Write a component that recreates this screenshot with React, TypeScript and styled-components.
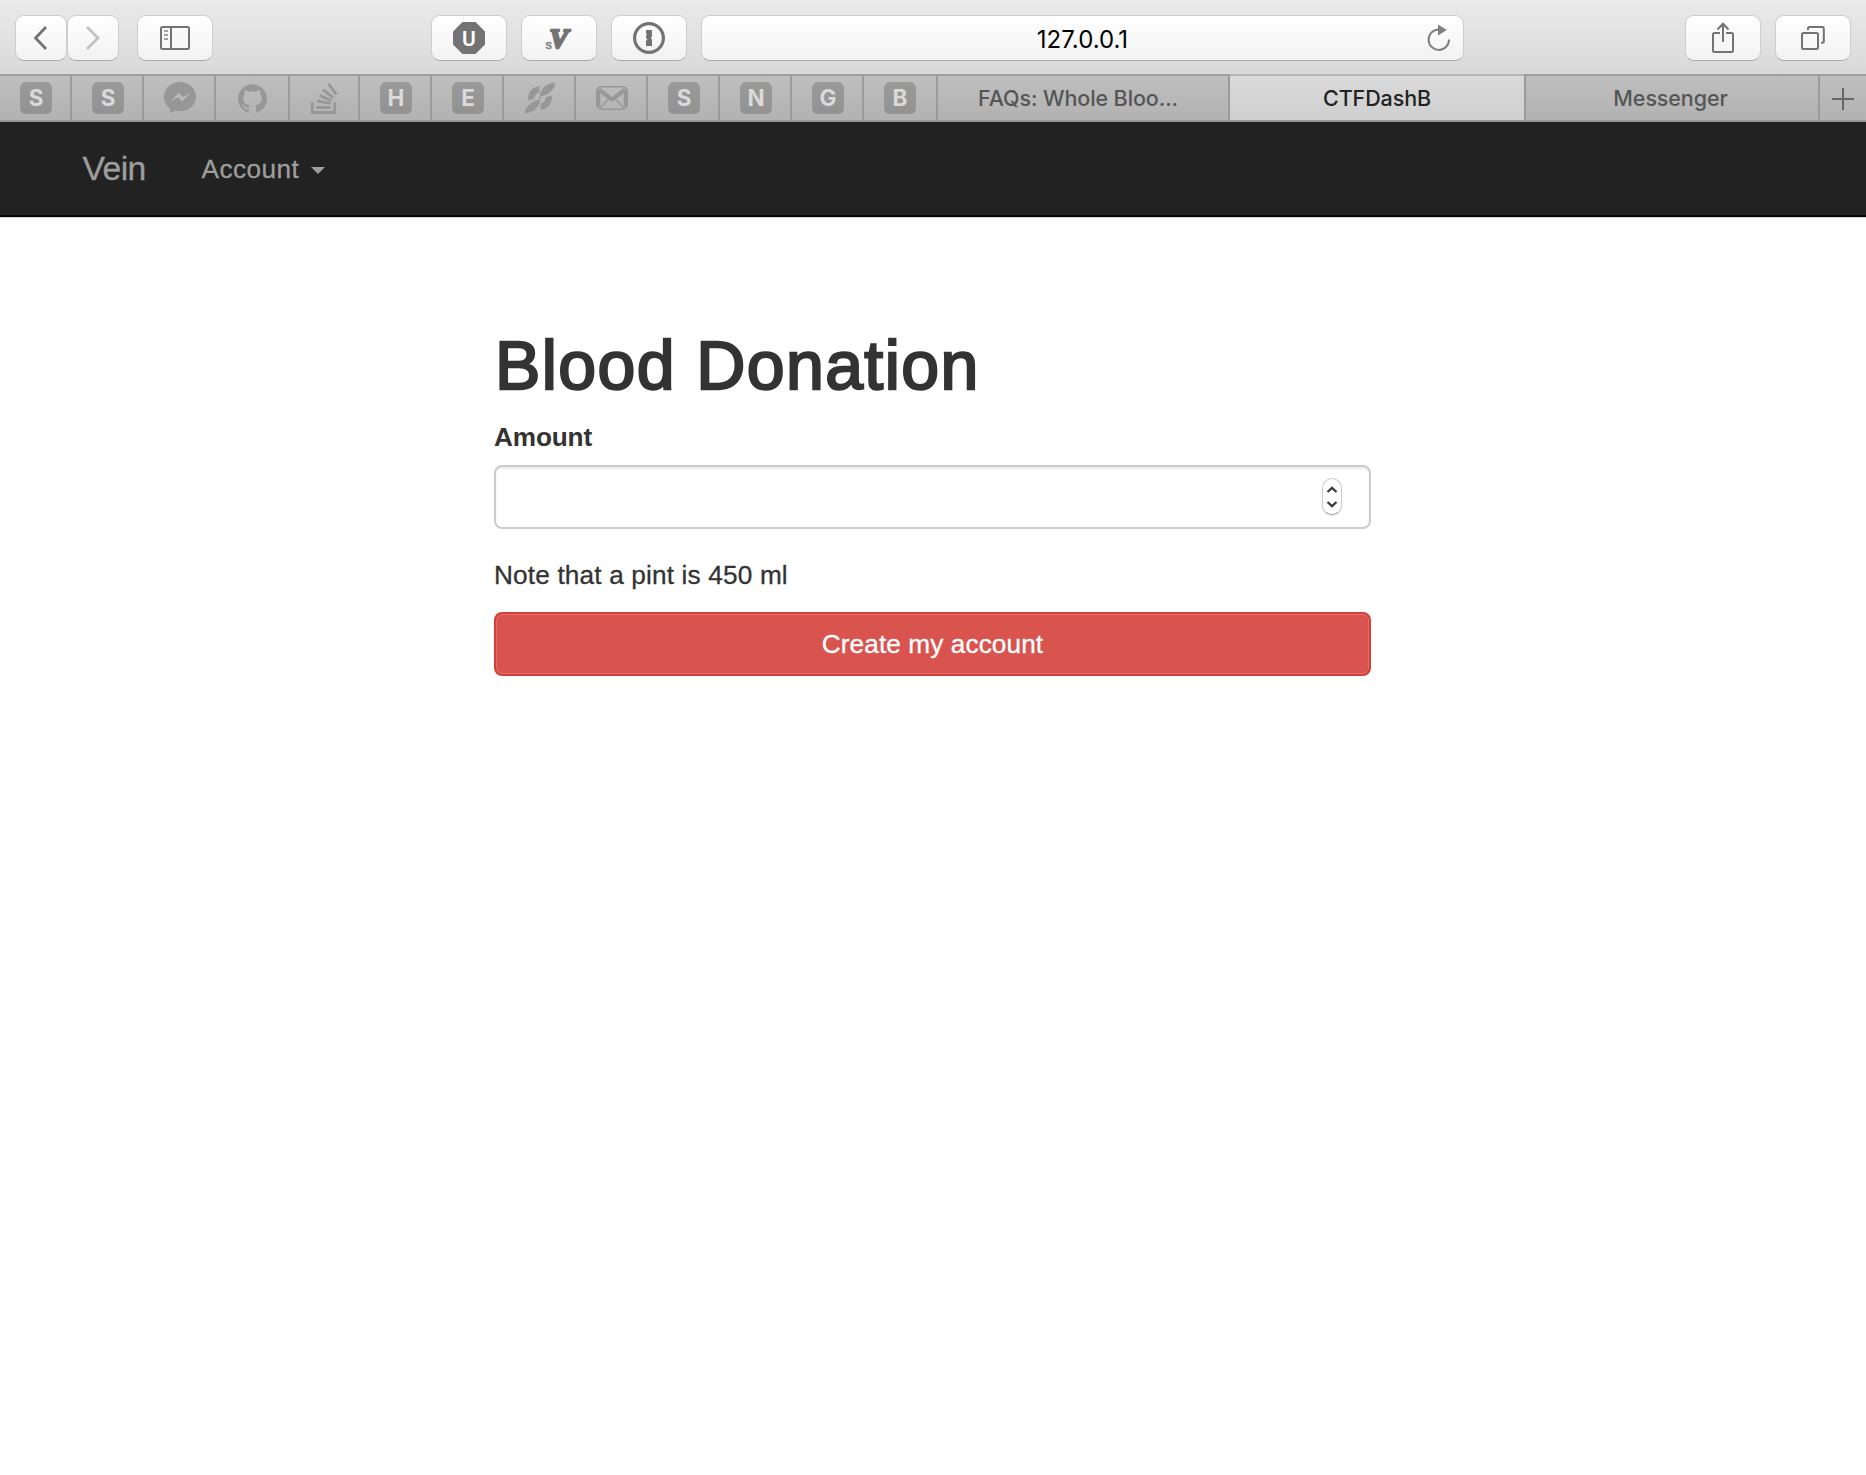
import { useState } from "react";
import styled, { createGlobalStyle } from "styled-components";
import { SiGithub } from "react-icons/si";

type Pin = { id: number; letter?: string; icon?: React.ReactNode; width?: number };

const pins: Pin[] = [
  { id: 1, letter: "S" },
  { id: 2, letter: "S" },
  { id: 3, icon: <MessengerIcon /> },
  { id: 4, icon: <GithubMark />, width: 74 },
  { id: 5, icon: <StackIcon />, width: 70 },
  { id: 6, letter: "H" },
  { id: 7, letter: "E" },
  { id: 8, icon: <PropellerIcon /> },
  { id: 9, icon: <MailIcon /> },
  { id: 10, letter: "S" },
  { id: 11, letter: "N" },
  { id: 12, letter: "G" },
  { id: 13, letter: "B", width: 74 },
];

export default function App() {
  return (
    <>
      <GlobalStyle />
      <Toolbar>
        <ToolButton $width={52}>
          <Icon>
            <path d="M21 5 10.5 16 21 27" strokeWidth="2.8" />
          </Icon>
        </ToolButton>
        <ToolButton $width={52} $color="#c3c3c3">
          <Icon>
            <path d="M10 5 21 16 10 27" strokeWidth="2.8" />
          </Icon>
        </ToolButton>
        <ToolButton $left={18}>
          <SidebarIcon />
        </ToolButton>
        <ToolButton $left={218}>
          <OctagonIcon />
        </ToolButton>
        <ToolButton $left={14}>
          <VimIcon />
        </ToolButton>
        <ToolButton $left={14}>
          <KeyholeIcon />
        </ToolButton>
        <AddressBar>
          <Address>127.0.0.1</Address>
          <ReloadIcon />
        </AddressBar>
        <RightButtons>
          <ToolButton>
            <ShareIcon />
          </ToolButton>
          <ToolButton>
            <WindowsIcon />
          </ToolButton>
        </RightButtons>
      </Toolbar>
      <TabBar>
        {pins.map((pin) => (
          <PinnedTab key={pin.id} $width={pin.width ?? 72}>
            {pin.letter ? <Badge>{pin.letter}</Badge> : pin.icon}
          </PinnedTab>
        ))}
        <Tab $width={292} $shift={10}>
          FAQs: Whole Bloo...
        </Tab>
        <Tab $width={296} $active>
          CTFDashB
        </Tab>
        <Tab $width={294} $shift={3}>
          Messenger
        </Tab>
        <NewTab>
          <svg width="22" height="22" viewBox="0 0 22 22">
            <path d="M11 0v22M0 11h22" stroke="#666" strokeWidth="2" />
          </svg>
        </NewTab>
      </TabBar>
      <Navbar>
        <Brand>Vein</Brand>
        <NavItem>
          Account
          <Caret />
        </NavItem>
      </Navbar>
      <DonationForm />
    </>
  );
}

function DonationForm() {
  const [amount, setAmount] = useState("");
  return (
    <Form onSubmit={(e) => e.preventDefault()}>
      <Title>Blood Donation</Title>
      <Label htmlFor="amount">Amount</Label>
      <Field>
        <Input
          id="amount"
          inputMode="numeric"
          value={amount}
          onChange={(e) => setAmount(e.target.value)}
        />
        <Stepper>
          <svg width="12" height="24" viewBox="0 0 12 24">
            <path
              d="M1.5 7 6 2.8 10.5 7M1.5 17 6 21.2 10.5 17"
              fill="none"
              stroke="#3c3c3c"
              strokeWidth="2.3"
            />
          </svg>
        </Stepper>
      </Field>
      <Note>Note that a pint is 450 ml</Note>
      <Submit type="submit">Create my account</Submit>
    </Form>
  );
}

function Icon({ children }: { children: React.ReactNode }) {
  return (
    <svg width="32" height="32" viewBox="0 0 32 32" fill="none" stroke="currentColor">
      {children}
    </svg>
  );
}

function SidebarIcon() {
  return (
    <Icon>
      <rect x="2" y="5" width="28" height="22" rx="1.5" strokeWidth="2" />
      <path d="M12 5v22" strokeWidth="2" />
      <path d="M5 9h4M5 13h4M5 17h4" strokeWidth="2" opacity=".65" />
    </Icon>
  );
}

function OctagonIcon() {
  return (
    <Icon>
      <path d="M9.5 0h13L32 9.5v13L22.5 32h-13L0 22.5v-13z" fill="currentColor" stroke="none" />
      <text
        x="16"
        y="23.5"
        fill="#fff"
        stroke="none"
        textAnchor="middle"
        fontFamily="Roboto, sans-serif"
        fontSize="21"
        fontWeight="600"
      >
        U
      </text>
    </Icon>
  );
}

function VimIcon() {
  return (
    <Icon>
      <text
        x="2.5"
        y="26.5"
        fill="#8a8a8a"
        stroke="#8a8a8a"
        strokeWidth=".7"
        fontFamily="Liberation Sans, sans-serif"
        fontSize="12.5"
      >
        s
      </text>
      <text
        x="6.5"
        y="25.5"
        fill="currentColor"
        stroke="currentColor"
        strokeWidth="2.4"
        fontFamily="Liberation Serif, serif"
        fontSize="28"
        fontStyle="italic"
        fontWeight="700"
      >
        V
      </text>
    </Icon>
  );
}

function KeyholeIcon() {
  return (
    <Icon>
      <circle cx="16" cy="16" r="14.4" strokeWidth="3.2" />
      <path
        d="M13 8h6v6.5L17.8 16l1.2 1.5V24h-6v-5l1.2-1.5L13 15.5v-2l1-1-1-1z"
        fill="currentColor"
        stroke="none"
      />
    </Icon>
  );
}

function ReloadIcon() {
  return (
    <svg width="26" height="30" viewBox="0 0 26 30">
      <path d="M23 16.5A10.2 10.2 0 1 1 12.5 6.5" fill="none" stroke="#808080" strokeWidth="2" />
      <path d="M12 1.5 20.8 7 12 12.5z" fill="#808080" />
    </svg>
  );
}

function ShareIcon() {
  return (
    <Icon>
      <path
        d="M13 11H7.5A1.5 1.5 0 0 0 6 12.5v16A1.5 1.5 0 0 0 7.5 30h17a1.5 1.5 0 0 0 1.5-1.5v-16a1.5 1.5 0 0 0-1.5-1.5H19"
        strokeWidth="2"
      />
      <path d="M16 20V1.8M10.5 7.5 16 1.8l5.5 5.7" strokeWidth="2" />
    </Icon>
  );
}

function WindowsIcon() {
  return (
    <Icon>
      <rect x="5" y="11" width="16" height="16" rx="1.5" strokeWidth="2" />
      <path
        d="M11 8V6.5A1.5 1.5 0 0 1 12.5 5h12.8a1.5 1.5 0 0 1 1.5 1.5v12.8a1.5 1.5 0 0 1-1.5 1.5H24"
        strokeWidth="2"
      />
    </Icon>
  );
}

function MessengerIcon() {
  return (
    <Icon>
      <path
        d="M16 0C7 0 0 6.5 0 15c0 5 2.3 8.8 6 11.800V31.5l5.3-2.9c1.5.4 3 .6 4.7.6 9 0 16-6.2 16-14.5S25 0 16 0z"
        fill="currentColor"
        stroke="none"
      />
      <path d="m6.5 19.5 8.2-8.7 4.2 4.3 7.7-4.3-8.3 8.7-4.2-4.3z" fill="#b9b9b9" stroke="none" />
    </Icon>
  );
}

function GithubMark() {
  return (
    <GithubBox>
      <SiGithub size={29} />
    </GithubBox>
  );
}

function StackIcon() {
  return (
    <Icon>
      <path d="M2.3 20.3v10.2h22.4V20.3" strokeWidth="2.8" />
      <path
        d="M6.3 25.5h13.9M7 18.9l13.5 2.6M9.5 13.3l11.8 5.5M13 7.6l10.3 8.3M18.3 1.5l8 11"
        strokeWidth="2.8"
      />
    </Icon>
  );
}

function PropellerIcon() {
  return (
    <Icon>
      <path
        d="M4.3 18.5A12 12 0 0 1 15.5 4.2v6.3A5.5 5.5 0 0 0 10.5 16.500zM27.7 13.500A12 12 0 0 1 16.5 27.800v-6.300A5.5 5.5 0 0 0 21.500 15.500z"
        fill="currentColor"
        stroke="none"
      />
      <path
        d="M15.8 14.2C15.5 8 23 .8 30.500.8c2 3.500-3.500 10.500-12 13.500zM16.200 17.800C16.500 24 9 31.200 1.500 31.200c-2-3.500 3.500-10.500 12-13.500z"
        fill="currentColor"
        stroke="none"
      />
      <circle cx="16" cy="16" r="1.2" fill="currentColor" stroke="none" />
    </Icon>
  );
}

function MailIcon() {
  return (
    <Icon>
      <rect x=".8" y="4.8" width="30.4" height="22.4" rx="5" strokeWidth="1.6" />
      <path d="M2.3 8v16M29.7 8v16" strokeWidth="3.8" />
      <path d="M3 7.5 16 17.5 29 7.5" strokeWidth="4" />
      <path d="M13 16.5 4 26M19 16.5 28 26" strokeWidth="1.2" />
    </Icon>
  );
}

const GlobalStyle = createGlobalStyle`
  * {
    box-sizing: border-box;
  }
  body {
    margin: 0;
    background: #fff;
    color: #333;
    font-family: "Liberation Sans", Arial, sans-serif;
    font-size: 26.2px;
  }
  svg {
    display: block;
    flex: none;
  }
`;

const Toolbar = styled.div`
  display: flex;
  height: 74px;
  padding: 15px 15px 0;
  background: linear-gradient(#eaeaea, #d9d9d9);
`;

const ToolButton = styled.button<{ $width?: number; $left?: number; $color?: string }>`
  display: flex;
  flex: none;
  align-items: center;
  justify-content: center;
  width: ${(props) => props.$width ?? 76}px;
  height: 46px;
  margin: 0 0 0 ${(props) => props.$left ?? 0}px;
  padding: 0;
  border: 1px solid #cdcdcd;
  border-bottom-color: #a9a9a9;
  border-radius: 9px;
  background: linear-gradient(#fff, #f2f2f2);
  color: ${(props) => props.$color ?? "#737373"};
`;

const AddressBar = styled.div`
  display: flex;
  align-items: center;
  width: 763px;
  height: 46px;
  margin-left: 14px;
  padding: 0 11px 0 37px;
  border: 1px solid #cdcdcd;
  border-bottom-color: #a9a9a9;
  border-radius: 9px;
  background: linear-gradient(#fff, #f2f2f2);
`;

const Address = styled.div`
  flex: 1;
  padding-top: 2px;
  text-align: center;
  color: #000;
  font-family: Inter, sans-serif;
  font-size: 24px;
  font-weight: 400;
`;

const RightButtons = styled.div`
  display: flex;
  gap: 14px;
  margin-left: auto;
`;

const TabBar = styled.div`
  display: flex;
  height: 48px;
  border-top: 2px solid #9f9f9f;
  border-bottom: 2px solid #979797;
  background: linear-gradient(#bebebe, #b2b2b2);
`;

const PinnedTab = styled.div<{ $width: number }>`
  display: flex;
  flex: none;
  align-items: center;
  width: ${(props) => props.$width}px;
  padding-left: 20px;
  border-right: 2px solid #9b9b9b;
  color: #979797;
`;

const Badge = styled.div`
  width: 32px;
  height: 32px;
  border-radius: 6px;
  background: linear-gradient(#9a9a9a, #929292);
  color: #dadada;
  font-family: Inter, sans-serif;
  font-size: 22.5px;
  font-weight: 700;
  line-height: 32px;
  text-align: center;
`;

const GithubBox = styled.div`
  padding-left: 1.5px;
`;

const Tab = styled.div<{ $width: number; $shift?: number; $active?: boolean }>`
  display: flex;
  flex: none;
  align-items: center;
  justify-content: center;
  width: ${(props) => props.$width}px;
  padding-right: ${(props) => props.$shift ?? 0}px;
  border-right: 2px solid #9b9b9b;
  ${(props) =>
    props.$active &&
    `
    margin-top: -2px;
    padding-top: 2px;
    box-shadow: inset 0 2px #b6b6b6;
    background: linear-gradient(#dadada, #cfcfcf);
  `}
  color: ${(props) => (props.$active ? "#222" : "#555")};
  font-family: Inter, sans-serif;
  font-size: 21.5px;
  font-weight: 450;
  letter-spacing: -0.1px;
`;

const NewTab = styled.div`
  display: flex;
  flex: 1;
  align-items: center;
  justify-content: center;
  padding-top: 1px;
`;

const Navbar = styled.nav`
  display: flex;
  height: 95px;
  padding-left: 82.5px;
  border-bottom: 2px solid #080808;
  box-shadow: 0 1px #d4d4d4;
  background: #222;
  color: #9d9d9d;
  line-height: 37px;
  -webkit-text-stroke: 0.3px;
`;

const Brand = styled.div`
  width: 119px;
  padding-top: 28px;
  font-size: 33.7px;
  letter-spacing: -0.6px;
`;

const NavItem = styled.div`
  display: flex;
  padding-top: 29px;
  letter-spacing: 0.45px;
`;

const Caret = styled.span`
  width: 0;
  height: 0;
  margin: 16px 0 0 12px;
  border: 7px solid transparent;
  border-top-color: currentColor;
  border-bottom: 0;
`;

const Form = styled.form`
  display: flex;
  flex-direction: column;
  width: 877px;
  margin-left: 494px;
  padding-top: 111px;
`;

const Title = styled.h1`
  margin: 0 0 17px;
  font-size: 68px;
  font-weight: 400;
  line-height: 74px;
  letter-spacing: 1.4px;
  text-indent: 1px;
  -webkit-text-stroke: 2.3px #333;
`;

const Label = styled.label`
  margin-bottom: 9px;
  font-weight: 700;
  line-height: 37px;
  letter-spacing: -0.15px;
`;

const Field = styled.div`
  display: flex;
  align-items: center;
  height: 64px;
  padding: 0 27.5px 1px 22px;
  border: 2px solid #ccc;
  border-radius: 8px;
  box-shadow: inset 0 2px 2px rgba(0, 0, 0, 0.075);
`;

const Input = styled.input`
  flex: 1;
  height: 44px;
  padding: 0;
  border: 0;
  outline: 0;
  background: transparent;
  color: #555;
  font: inherit;
`;

const Stepper = styled.div`
  display: flex;
  align-items: center;
  justify-content: center;
  width: 20px;
  height: 37px;
  border: 1px solid #ccc;
  border-bottom-color: #aaa;
  border-radius: 10px;
  box-shadow: 0 1px 1px rgba(0, 0, 0, 0.15);
`;

const Note = styled.p`
  margin: 28px 0 18px;
  line-height: 37px;
  letter-spacing: 0.16px;
  -webkit-text-stroke: 0.3px;
`;

const Submit = styled.button`
  height: 64px;
  padding: 0;
  border: 2px solid #d43f3a;
  border-radius: 8px;
  box-shadow: inset 0 0 0 1px #e0706c;
  background: #d9534f;
  color: #fff;
  font: inherit;
  letter-spacing: 0.1px;
  -webkit-text-stroke: 0.3px;
`;
